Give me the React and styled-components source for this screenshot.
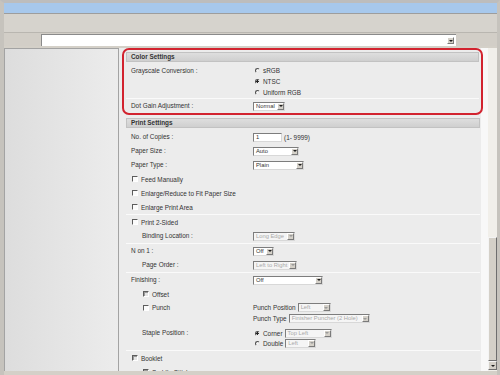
import React from 'react'
import styled, { createGlobalStyle } from 'styled-components'

const GlobalStyle = createGlobalStyle`
  body {
    margin: 0;
    font-family: 'Liberation Sans', Arial, sans-serif;
    background: #d4d0c8;
  }
`

function Select({ w, value, disabled }) {
  return (
    <SelectBox $w={w} $disabled={disabled}>
      <SelectText>{value}</SelectText>
      <DropButton $disabled={disabled} />
    </SelectBox>
  )
}

function Radio({ checked, children }) {
  return (
    <RadioOption>
      <RadioDot $checked={checked} />
      {children}
    </RadioOption>
  )
}

function CheckRow({ label, indent, disabled }) {
  return (
    <Row>
      <CheckLabel $indent={indent}>
        <CheckBox $disabled={disabled} />
        {label}
      </CheckLabel>
      <Value />
    </Row>
  )
}

function App() {
  return (
    <>
      <GlobalStyle />
      <Window>
        <TitleBar />
        <Toolbar />
        <AddressRow>
          <AddressField>
            <DropButton />
          </AddressField>
        </AddressRow>
        <Main>
          <Sidebar />
          <Page>
            <Highlight>
              <Section>
                <Header>Color Settings</Header>
                <Group>
                  <MultiRow $pad={0}>
                    <Label $line={11}>Grayscale Conversion :</Label>
                    <Value $column>
                      <Radio>sRGB</Radio>
                      <Radio checked>NTSC</Radio>
                      <Radio>Uniform RGB</Radio>
                    </Value>
                  </MultiRow>
                </Group>
                <Row>
                  <Label>Dot Gain Adjustment :</Label>
                  <Value>
                    <Select w={32} value='Normal' />
                  </Value>
                </Row>
              </Section>
            </Highlight>

            <PrintSection>
              <Header>Print Settings</Header>
              <Group $top={2}>
                <Row>
                  <Label>No. of Copies :</Label>
                  <Value>
                    <TextInput>1</TextInput>
                    <Hint>(1- 9999)</Hint>
                  </Value>
                </Row>
                <Row>
                  <Label>Paper Size :</Label>
                  <Value>
                    <Select w={46} value='Auto' />
                  </Value>
                </Row>
                <Row>
                  <Label>Paper Type :</Label>
                  <Value>
                    <Select w={51} value='Plain' />
                  </Value>
                </Row>
                <CheckRow label='Feed Manually' />
                <CheckRow label='Enlarge/Reduce to Fit Paper Size' />
                <CheckRow label='Enlarge Print Area' />
              </Group>
              <Group>
                <CheckRow label='Print 2-Sided' />
                <Row>
                  <Label $indent>Binding Location :</Label>
                  <Value>
                    <Select w={42} value='Long Edge' disabled />
                  </Value>
                </Row>
              </Group>
              <Group>
                <Row>
                  <Label>N on 1 :</Label>
                  <Value>
                    <Select w={21} value='Off' />
                  </Value>
                </Row>
                <Row>
                  <Label $indent>Page Order :</Label>
                  <Value>
                    <Select w={44} value='Left to Right' disabled />
                  </Value>
                </Row>
              </Group>
              <Group>
                <Row>
                  <Label>Finishing :</Label>
                  <Value>
                    <Select w={70} value='Off' />
                  </Value>
                </Row>
                <CheckRow label='Offset' indent disabled />
                <MultiRow $pad={1}>
                  <CheckLabel $indent $line={11}>
                    <CheckBox />
                    Punch
                  </CheckLabel>
                  <Value $column>
                    <SubLine $h={11}>
                      Punch Position
                      <Select w={33} value='Left' disabled />
                    </SubLine>
                    <SubLine $h={11}>
                      Punch Type
                      <Select w={81} value='Finisher Puncher (2 Hole)' disabled />
                    </SubLine>
                  </Value>
                </MultiRow>
                <MultiRow $pad={2}>
                  <Label $indent $line={10}>Staple Position :</Label>
                  <Value $column>
                    <SubLine $h={10}>
                      <Radio checked>Corner</Radio>
                      <Select w={47} value='Top Left' disabled />
                    </SubLine>
                    <SubLine $h={10}>
                      <Radio>Double</Radio>
                      <Select w={31} value='Left' disabled />
                    </SubLine>
                  </Value>
                </MultiRow>
              </Group>
              <Group>
                <CheckRow label='Booklet' disabled />
                <CheckRow label='Saddle Stitch' indent disabled />
              </Group>
            </PrintSection>
          </Page>
          <Gutter />
          <Scrollbar>
            <Track>
              <Thumb />
            </Track>
            <ArrowButton />
          </Scrollbar>
        </Main>
      </Window>
    </>
  )
}

export default App

const Window = styled.div`
  width: 500px;
  height: 375px;
  box-sizing: border-box;
  background: #d4d0c8;
  border-top: 3px solid #bdbdbd;
  border-left: 4px solid #c6c3bd;
  border-right: 3px solid #c6c3bd;
  display: flex;
  flex-direction: column;
  overflow: hidden;
`
const TitleBar = styled.div`
  height: 10px;
  flex: none;
  margin-left: -1px;
  background: #a7c8ec;
  border-bottom: 1px solid #9d9d9d;
`
const Toolbar = styled.div`
  height: 18px;
  flex: none;
  background: #d6d3cd;
`
const AddressRow = styled.div`
  height: 14px;
  flex: none;
  box-sizing: border-box;
  display: flex;
  padding: 1px 0 0 37px;
  background: #d2cec7;
  border-top: 1px solid #b9b6b0;
`
const AddressField = styled.div`
  width: 415px;
  height: 12px;
  box-sizing: border-box;
  background: #fff;
  border-top: 1px solid #8a8a8a;
  border-left: 1px solid #8a8a8a;
  display: flex;
  align-items: center;
  justify-content: flex-end;
  padding-right: 2px;
`
const Main = styled.div`
  height: 323px;
  flex: none;
  margin-top: 2px;
  display: flex;
  overflow: hidden;
`
const Sidebar = styled.aside`
  width: 115px;
  flex: none;
  box-sizing: border-box;
  border: 1px solid #a3a3a3;
  border-bottom: none;
  background: linear-gradient(to right, #dddddd, #e6e6e6 60%, #ececec);
`
const Page = styled.div`
  width: 362px;
  flex: none;
  box-sizing: border-box;
  padding: 0 1px 0 3px;
  background: #ececec;
  color: #333;
  font-size: 6.4px;
`
const Highlight = styled.div`
  position: relative;
  z-index: 1;
  margin-right: -3px;
  padding: 2px 2px 0;
  border: 2px solid #d2232f;
  border-radius: 7px;
`
const Section = styled.section`
  display: flex;
  flex-direction: column;
`
const PrintSection = styled(Section)`
  margin: 3px 0 0 4px;
`
const Header = styled.header`
  height: 10px;
  box-sizing: border-box;
  border: 1px solid #c2c2c2;
  background: linear-gradient(#dedede, #cfcfcf);
  padding-left: 4px;
  font-weight: bold;
  font-size: 6.4px;
  line-height: 8px;
  color: #333;
`
const Group = styled.div`
  padding-top: ${(p) => p.$top || 0}px;
  border-bottom: 1px solid #fafafa;
  &:first-of-type {
    padding-top: ${(p) => (p.$top === undefined ? 3 : p.$top)}px;
  }
`
const Row = styled.div`
  display: grid;
  grid-template-columns: 127px 1fr;
  height: 14px;
  align-items: center;
`
const MultiRow = styled.div`
  display: grid;
  grid-template-columns: 127px 1fr;
  align-items: start;
  padding: ${(p) => p.$pad}px 0 ${(p) => (p.$pad ? 2 : 0)}px;
`
const Label = styled.div`
  padding-left: ${(p) => (p.$indent ? 16 : 5)}px;
  white-space: nowrap;
  line-height: ${(p) => p.$line || 14}px;
`
const CheckLabel = styled.div`
  display: flex;
  align-items: center;
  gap: 3px;
  padding-left: ${(p) => (p.$indent ? 17 : 6)}px;
  white-space: nowrap;
  height: ${(p) => p.$line || 14}px;
`
const CheckBox = styled.span`
  width: 6px;
  height: 6px;
  box-sizing: border-box;
  flex: none;
  border: 1px solid;
  border-color: #5c5c5c #ffffff #ffffff #5c5c5c;
  background: ${(p) => (p.$disabled ? '#e4e4e4' : '#fbfbfb')};
  box-shadow: ${(p) => (p.$disabled ? 'inset 1px 1px 0 #9a9a9a' : 'none')};
`
const Value = styled.div`
  display: flex;
  flex-direction: ${(p) => (p.$column ? 'column' : 'row')};
  align-items: ${(p) => (p.$column ? 'flex-start' : 'center')};
  gap: ${(p) => (p.$column ? 0 : 2)}px;
  white-space: nowrap;
`
const SubLine = styled.div`
  height: ${(p) => p.$h}px;
  display: flex;
  align-items: center;
  gap: 2px;
  & > label {
    height: auto;
  }
`
const RadioOption = styled.label`
  display: flex;
  align-items: center;
  gap: 3px;
  height: 11px;
  padding-left: 2px;
`
const RadioDot = styled.span`
  width: 5px;
  height: 5px;
  box-sizing: border-box;
  flex: none;
  border-radius: 50%;
  border: 1px solid;
  border-color: #4d4d4d #e8e8e8 #e8e8e8 #4d4d4d;
  background: ${(p) =>
    p.$checked ? 'radial-gradient(circle, #222 0 1px, #f6f6f6 1.3px)' : '#f2f2f2'};
`
const SelectBox = styled.div`
  width: ${(p) => p.$w}px;
  height: 9px;
  box-sizing: border-box;
  display: flex;
  align-items: center;
  border: 1px solid;
  border-color: #7d7d7d #d8d8d8 #d8d8d8 #7d7d7d;
  background: ${(p) => (p.$disabled ? '#f5f5f5' : '#fff')};
  color: ${(p) => (p.$disabled ? '#a9a9a9' : '#333')};
  font-size: 5.8px;
  line-height: 7px;
  overflow: hidden;
`
const SelectText = styled.span`
  flex: 1;
  padding-left: 2px;
  overflow: hidden;
  white-space: nowrap;
`
const DropButton = styled.span`
  width: 7px;
  height: 7px;
  box-sizing: border-box;
  flex: none;
  display: flex;
  align-items: center;
  justify-content: center;
  background: #d4d0c8;
  border: 1px solid;
  border-color: #ffffff #7a7a7a #7a7a7a #ffffff;
  &::after {
    content: '';
    border-left: 2px solid transparent;
    border-right: 2px solid transparent;
    border-top: 2px solid ${(p) => (p.$disabled ? '#9a9a9a' : '#1e1e1e')};
  }
`
const TextInput = styled.div`
  width: 29px;
  height: 9px;
  box-sizing: border-box;
  border: 1px solid;
  border-color: #7d7d7d #d8d8d8 #d8d8d8 #7d7d7d;
  background: #fff;
  font-size: 5.8px;
  line-height: 7px;
  padding-left: 2px;
`
const Hint = styled.span`
  color: #333;
`
const Gutter = styled.div`
  width: 7px;
  flex: none;
  background: #f8f8f8;
`
const Scrollbar = styled.div`
  width: 9px;
  flex: none;
  display: flex;
  flex-direction: column;
  padding-bottom: 1px;
  box-sizing: border-box;
  background: #f1efea;
`
const Track = styled.div`
  flex: 1;
  display: flex;
  flex-direction: column;
  justify-content: flex-end;
`
const Thumb = styled.div`
  height: 124px;
  box-sizing: border-box;
  background: #d4d0c8;
  border: 1px solid;
  border-color: #f4f4f4 #6e6e6e #6e6e6e #f4f4f4;
`
const ArrowButton = styled.div`
  height: 9px;
  box-sizing: border-box;
  background: #d4d0c8;
  border: 1px solid;
  border-color: #f4f4f4 #6e6e6e #6e6e6e #f4f4f4;
  display: flex;
  align-items: center;
  justify-content: center;
  &::after {
    content: '';
    border-left: 2px solid transparent;
    border-right: 2px solid transparent;
    border-top: 2px solid #1e1e1e;
  }
`
